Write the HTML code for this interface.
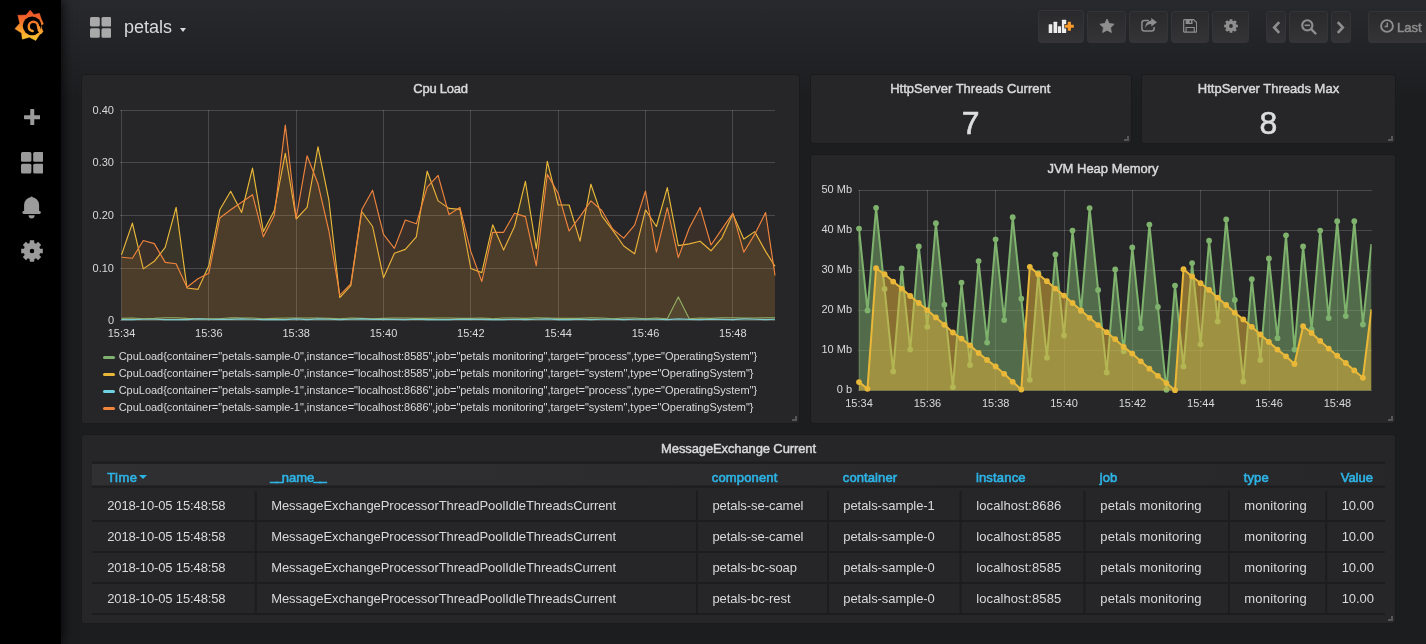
<!DOCTYPE html><html><head><meta charset="utf-8"><title>Grafana - petals</title><style>
*{box-sizing:border-box}
html,body{margin:0;padding:0}
body{width:1426px;height:644px;overflow:hidden;background:#1c1d1f linear-gradient(180deg,#28292c 0,#1c1d1f 100px) no-repeat;color:#d8d9da;font-family:"Liberation Sans",sans-serif;font-size:13px;position:relative}
#app{position:absolute;left:0;top:0;width:1426px;height:644px;will-change:transform}
.abs{position:absolute}
#side{left:0;top:0;width:61px;height:644px;background:#000;box-shadow:0 0 12px #000}
#side .ic{position:absolute;display:block;line-height:0}
.title{position:absolute;left:124px;top:16px;font-size:18px;line-height:22px;color:#d8d9da;white-space:nowrap}
.caret{position:absolute;left:179.5px;top:27.5px;width:0;height:0;border-left:3.5px solid transparent;border-right:3.5px solid transparent;border-top:4px solid #d8d9da}
.btn{position:absolute;top:11px;height:32px;border:1px solid #343437;border-radius:3px;background:linear-gradient(180deg,#2a2a2c,#343436)}
.btn svg{position:absolute}
.panel{position:absolute;background:#262628;border:1px solid #1a1a1c;border-radius:3px;overflow:hidden}
.ptitle{position:absolute;left:0;right:0;text-align:center;font-size:13px;line-height:16px;color:#d8d9da;white-space:nowrap;-webkit-text-stroke:0.45px #d8d9da}
.big{position:absolute;left:0;right:0;text-align:center;font-size:32px;line-height:32px;color:#dddedf;-webkit-text-stroke:0.6px #dddedf}
.rz{position:absolute;right:2px;bottom:2px;width:5px;height:5px;border-right:2px solid #555557;border-bottom:2px solid #555557}
.g{stroke:rgba(200,200,200,0.22);stroke-width:1;shape-rendering:crispEdges}
.ax{font-family:"Liberation Sans",sans-serif;font-size:11px;fill:#d8d9da}
.lg{position:absolute;left:21px;height:17px;white-space:nowrap;font-size:11px;line-height:17px;color:#d8d9da;letter-spacing:-0.026px}
.lg i{position:absolute;left:0;top:7.6px;width:12px;height:3px;border-radius:1.5px}
.lg span{position:absolute;left:15.7px;top:0}
.th{position:absolute;white-space:nowrap;font-size:13px;line-height:15px;color:#2db4e6;-webkit-text-stroke:0.6px #2db4e6}
.td{position:absolute;white-space:nowrap;font-size:13px;line-height:15px;color:#d8d9da}
</style></head><body><div id="app">
<div id="side" class="abs">
<span class="ic" style="left:12px;top:8px"><svg width="34" height="34" viewBox="0 0 644 644"><defs><linearGradient id="lg" gradientUnits="userSpaceOnUse" x1="0" y1="40" x2="0" y2="620"><stop offset="0" stop-color="#ee5128"/><stop offset="0.300" stop-color="#f2692b"/><stop offset="0.600" stop-color="#f7962c"/><stop offset="1" stop-color="#fdca30"/></linearGradient></defs><path d="M345,40 L415,122 L520,100 L552,200 L603,318 L552,356 L590,450 L522,505 L450,615 L330,556 L195,590 L180,474 L55,395 L146,290 L110,135 L265,134Z" fill="url(#lg)" stroke="url(#lg)" stroke-width="8" stroke-linejoin="round"/><circle cx="381" cy="337" r="177" fill="#000"/><path d="M548,330 L612,300 L600,352 Z" fill="#000"/><path d="M545,470 Q500,430 493,350 A88,88 0 0 0 405,262 A88,88 0 0 0 317,350 A88,88 0 0 0 392,436" fill="none" stroke="url(#lg)" stroke-width="46" stroke-linecap="round"/><path d="M560,460 Q512,420 512,345" fill="none" stroke="url(#lg)" stroke-width="40" stroke-linecap="butt"/></svg></span>
<span class="ic" style="left:23.7px;top:108.600px"><svg width="16.5" height="16.5" viewBox="0 0 16.5 16.5"><rect x="0" y="6.25" width="16.5" height="4" rx="0.7" fill="#9b9b9b"/><rect x="6.25" y="0" width="4" height="16.5" rx="0.7" fill="#9b9b9b"/></svg></span>
<span class="ic" style="left:20.7px;top:152px"><svg width="22.6" height="21.5" viewBox="0 0 22.6 21.5"><rect x="0.00" y="0.00" width="10.40" height="9.85" rx="1.6" fill="#9b9b9b"/><rect x="12.20" y="0.00" width="10.40" height="9.85" rx="1.6" fill="#9b9b9b"/><rect x="0.00" y="11.65" width="10.40" height="9.85" rx="1.6" fill="#9b9b9b"/><rect x="12.20" y="11.65" width="10.40" height="9.85" rx="1.6" fill="#9b9b9b"/></svg></span>
<span class="ic" style="left:22px;top:196.300px"><svg width="19" height="23" viewBox="0 0 19 23"><circle cx="9.600" cy="1.700" r="1.200" fill="#9b9b9b"/><path fill="#9b9b9b" d="M2.100 15.600V8.800a7.500 7.500 0 0 1 15 0V15.600z"/><rect x="0.400" y="14.900" width="18.400" height="3" rx="1.400" fill="#9b9b9b"/><path fill="#9b9b9b" d="M6.500 19.300h6.200a3.100 3.100 0 0 1-6.200 0z"/></svg></span>
<span class="ic" style="left:21.200px;top:240.400px"><svg width="22" height="22" viewBox="0 0 22 22"><path fill-rule="evenodd" fill="#9b9b9b" d="M19.03,8.67 L21.79,8.85 L21.79,13.15 L19.03,13.33 L18.33,15.03 L20.15,17.11 L17.11,20.15 L15.03,18.33 L13.33,19.03 L13.15,21.79 L8.85,21.79 L8.67,19.03 L6.97,18.33 L4.89,20.15 L1.85,17.11 L3.67,15.03 L2.97,13.33 L0.21,13.15 L0.21,8.85 L2.97,8.67 L3.67,6.97 L1.85,4.89 L4.89,1.85 L6.97,3.67 L8.67,2.97 L8.85,0.21 L13.15,0.21 L13.33,2.97 L15.03,3.67 L17.11,1.85 L20.15,4.89 L18.33,6.97Z M8.69,11.00 a2.31,2.31 0 1,0 4.62,0 a2.31,2.31 0 1,0 -4.62,0Z"/></svg></span>
</div>
<span class="abs" style="left:89.700px;top:17px;line-height:0"><svg width="21.3" height="20.8" viewBox="0 0 21.3 20.8"><rect x="0.00" y="0.00" width="9.80" height="9.55" rx="1.6" fill="#a9a9a9"/><rect x="11.50" y="0.00" width="9.80" height="9.55" rx="1.6" fill="#a9a9a9"/><rect x="0.00" y="11.25" width="9.80" height="9.55" rx="1.6" fill="#a9a9a9"/><rect x="11.50" y="11.25" width="9.80" height="9.55" rx="1.6" fill="#a9a9a9"/></svg></span>
<div class="title">petals</div><div class="caret"></div>
<div class="btn" style="left:1038px;width:46px;top:10px;height:33px"><span class="abs" style="left:9px;top:8px;line-height:0"><svg width="27" height="15" viewBox="-0.300 -0.500 27 15"><rect x="0.400" y="4.700" width="3.600" height="8.800" rx="0.500" fill="#ececec"/><rect x="5.200" y="2.300" width="3.700" height="11.200" rx="0.500" fill="#ececec"/><rect x="9.600" y="6.700" width="3.200" height="6.800" rx="0.500" fill="#ececec"/><rect x="13.600" y="0.200" width="4.300" height="13.300" rx="0.500" fill="#ececec"/><path d="M19.450 2.300h3.200v2.850h2.850v3.200h-2.850v2.850h-3.200V8.350h-2.850V5.150h2.850z" fill="#f89b2b" stroke="#2d2d2f" stroke-width="1.200" paint-order="stroke"/></svg></span></div>
<div class="btn" style="left:1087px;width:39px;top:11px;height:32px"><span class="abs" style="left:10.6px;top:6.3px;line-height:0"><svg width="16" height="16" viewBox="0 0 16 16"><polygon fill="#8e8e8e" stroke="#8e8e8e" stroke-width="0.8" stroke-linejoin="round" points="8.00,1.00 10.17,5.51 15.13,6.18 11.52,9.64 12.41,14.57 8.00,12.20 3.59,14.57 4.48,9.64 0.87,6.18 5.83,5.51"/></svg></span></div>
<div class="btn" style="left:1129px;width:39px;top:11px;height:32px"><span class="abs" style="left:10.6px;top:6.2px;line-height:0"><svg width="16" height="14" viewBox="0 0 16 14"><path fill="none" stroke="#8e8e8e" stroke-width="1.5" stroke-linecap="round" d="M7.2 2.400H3.400C1.900 2.400 0.900 3.400 0.900 4.900v5.700c0 1.500 1 2.500 2.500 2.500h7.200c1.500 0 2.500-1 2.500-2.500V9.500"/><path fill="#8e8e8e" d="M10.300 0l5.700 4.300-5.700 4.300V6.100C7 6.100 5.300 7.400 4.400 10.300 4.100 5.600 6.700 2.800 10.300 2.600z"/></svg></span></div>
<div class="btn" style="left:1171px;width:38px;top:11px;height:32px"><span class="abs" style="left:10.5px;top:7px;line-height:0"><svg width="14.300" height="13.700" viewBox="0 0 15 15" preserveAspectRatio="none"><path fill="none" stroke="#8e8e8e" stroke-width="1.300" stroke-linejoin="round" d="M0.700 1.400c0-0.400 0.300-0.700 0.700-0.700h9.700l3.200 3.200v9.700c0 0.400-0.300 0.700-0.700 0.700H1.400c-0.400 0-0.700-0.300-0.700-0.700z"/><path fill="none" stroke="#8e8e8e" stroke-width="1.200" d="M3.400 0.900v4h6v-4M3.200 14.200V9.300h8.600v4.900"/><path d="M3.400 0.900h6v4h-6z M7 1.600v2.500h1.500V1.600z" fill-rule="evenodd" fill="#8e8e8e"/></svg></span></div>
<div class="btn" style="left:1212px;width:37px;top:11px;height:32px"><span class="abs" style="left:10.7px;top:7px;line-height:0"><svg width="14" height="14" viewBox="0 0 14 14"><path fill-rule="evenodd" fill="#8e8e8e" d="M12.11,5.52 L13.87,5.63 L13.87,8.37 L12.11,8.48 L11.66,9.56 L12.82,10.89 L10.89,12.82 L9.56,11.66 L8.48,12.11 L8.37,13.87 L5.63,13.87 L5.52,12.11 L4.44,11.66 L3.11,12.82 L1.18,10.89 L2.34,9.56 L1.89,8.48 L0.13,8.37 L0.13,5.63 L1.89,5.52 L2.34,4.44 L1.18,3.11 L3.11,1.18 L4.44,2.34 L5.52,1.89 L5.63,0.13 L8.37,0.13 L8.48,1.89 L9.56,2.34 L10.89,1.18 L12.82,3.11 L11.66,4.44Z M5.11,7.00 a1.89,1.89 0 1,0 3.78,0 a1.89,1.89 0 1,0 -3.78,0Z"/></svg></span></div>
<div class="btn" style="left:1266px;width:20px;top:11px;height:32px"><span class="abs" style="left:5px;top:9.1px;line-height:0"><svg width="9" height="13" viewBox="0 0 9 13"><path fill="none" stroke="#8e8e8e" stroke-width="2.600" d="M7.200 1.200L2.200 6.500l5 5.300"/></svg></span></div>
<div class="btn" style="left:1289px;width:39px;top:11px;height:32px"><span class="abs" style="left:11px;top:7px;line-height:0"><svg width="16" height="16" viewBox="0 0 16 16"><circle cx="6.300" cy="6.300" r="5.100" fill="none" stroke="#8e8e8e" stroke-width="2.100"/><path d="M10.200 10.200l4.300 4.300" stroke="#8e8e8e" stroke-width="2.400" stroke-linecap="round"/><rect x="3.600" y="5.500" width="5.400" height="1.600" fill="#8e8e8e"/></svg></span></div>
<div class="btn" style="left:1331px;width:20px;top:11px;height:32px"><span class="abs" style="left:3.6px;top:9.1px;line-height:0"><svg width="9" height="13" viewBox="0 0 9 13"><path fill="none" stroke="#8e8e8e" stroke-width="2.600" d="M1.800 1.200l5 5.300-5 5.300"/></svg></span></div>
<div class="btn" style="left:1368px;width:70px;border-radius:3px 0 0 3px"><span class="abs" style="left:11px;top:7.200px;line-height:0"><svg width="14" height="14" viewBox="0 0 14 14"><circle cx="7" cy="7" r="5.900" fill="none" stroke="#8e8e8e" stroke-width="1.900"/><path d="M7.300 3.400v4.200H4.600" fill="none" stroke="#8e8e8e" stroke-width="1.500"/></svg></span><span class="abs" style="left:28px;top:7px;font-size:13px;line-height:18px;color:#8e8e8e;-webkit-text-stroke:0.5px #8e8e8e;white-space:nowrap">Last 15 minutes</span></div>
<div class="panel" style="left:81px;top:74px;width:719px;height:350px">
<svg class="abs" style="left:0;top:0" width="717" height="348" viewBox="82 75 717 348">
<line x1="120" x2="775" y1="110.5" y2="110.5" class="g"/>
<line x1="120" x2="775" y1="162.5" y2="162.5" class="g"/>
<line x1="120" x2="775" y1="215.5" y2="215.5" class="g"/>
<line x1="120" x2="775" y1="268.5" y2="268.5" class="g"/>
<line x1="120" x2="775" y1="320.5" y2="320.5" class="g"/>
<line y1="110" y2="321" x1="121.5" x2="121.5" class="g"/>
<line y1="110" y2="321" x1="208.5" x2="208.5" class="g"/>
<line y1="110" y2="321" x1="296.5" x2="296.5" class="g"/>
<line y1="110" y2="321" x1="383.5" x2="383.5" class="g"/>
<line y1="110" y2="321" x1="470.5" x2="470.5" class="g"/>
<line y1="110" y2="321" x1="558.5" x2="558.5" class="g"/>
<line y1="110" y2="321" x1="645.5" x2="645.5" class="g"/>
<line y1="110" y2="321" x1="732.5" x2="732.5" class="g"/>
<path d="M121.5,320.3 L121.5,318.4 L132.4,318.0 L143.3,318.7 L154.3,318.4 L165.2,317.7 L176.1,317.7 L187.0,318.4 L197.9,318.7 L208.8,318.7 L219.8,318.7 L230.7,317.7 L241.6,318.0 L252.5,318.0 L263.4,318.7 L274.3,318.4 L285.3,318.0 L296.2,318.0 L307.1,318.0 L318.0,318.0 L328.9,318.4 L339.8,318.7 L350.8,318.0 L361.7,318.4 L372.6,318.7 L383.5,318.4 L394.4,318.0 L405.3,318.0 L416.3,318.4 L427.2,318.4 L438.1,318.0 L449.0,318.0 L459.9,318.4 L470.8,318.4 L481.8,318.0 L492.7,318.7 L503.6,318.0 L514.5,318.0 L525.4,318.4 L536.3,317.7 L547.3,318.0 L558.2,318.4 L569.1,318.4 L580.0,318.4 L590.9,317.7 L601.8,318.0 L612.8,318.7 L623.7,318.0 L634.6,318.0 L645.5,318.7 L656.4,318.0 L667.3,318.7 L678.3,296.9 L689.2,318.7 L700.1,318.0 L711.0,318.4 L721.9,317.7 L732.8,317.7 L743.8,318.0 L754.7,318.0 L765.6,317.7 L775.0,317.7 L775.0,320.3 Z" fill="#7EB26D" fill-opacity="0.1"/>
<polyline points="121.5,318.4 132.4,318.0 143.3,318.7 154.3,318.4 165.2,317.7 176.1,317.7 187.0,318.4 197.9,318.7 208.8,318.7 219.8,318.7 230.7,317.7 241.6,318.0 252.5,318.0 263.4,318.7 274.3,318.4 285.3,318.0 296.2,318.0 307.1,318.0 318.0,318.0 328.9,318.4 339.8,318.7 350.8,318.0 361.7,318.4 372.6,318.7 383.5,318.4 394.4,318.0 405.3,318.0 416.3,318.4 427.2,318.4 438.1,318.0 449.0,318.0 459.9,318.4 470.8,318.4 481.8,318.0 492.7,318.7 503.6,318.0 514.5,318.0 525.4,318.4 536.3,317.7 547.3,318.0 558.2,318.4 569.1,318.4 580.0,318.4 590.9,317.7 601.8,318.0 612.8,318.7 623.7,318.0 634.6,318.0 645.5,318.7 656.4,318.0 667.3,318.7 678.3,296.9 689.2,318.7 700.1,318.0 711.0,318.4 721.9,317.7 732.8,317.7 743.8,318.0 754.7,318.0 765.6,317.7 775.0,317.7" fill="none" stroke="#7EB26D" stroke-width="1.15" stroke-linejoin="round"/>
<path d="M121.5,320.3 L121.5,254.9 L132.4,223.1 L143.3,268.9 L154.3,261.3 L165.2,247.3 L176.1,207.4 L187.0,288.0 L197.9,289.4 L208.8,265.8 L219.8,209.8 L230.7,191.3 L241.6,212.5 L252.5,168.1 L263.4,231.6 L274.3,210.5 L285.3,153.4 L296.2,219.0 L307.1,207.4 L318.0,146.9 L328.9,200.2 L339.8,297.5 L350.8,285.6 L361.7,211.5 L372.6,226.5 L383.5,277.7 L394.4,253.2 L405.3,249.4 L416.3,236.8 L427.2,171.2 L438.1,200.9 L449.0,208.4 L459.9,209.4 L470.8,268.5 L481.8,272.6 L492.7,224.8 L503.6,250.1 L514.5,226.5 L525.4,181.4 L536.3,248.7 L547.3,161.3 L558.2,205.0 L569.1,205.0 L580.0,241.2 L590.9,184.2 L601.8,215.9 L612.8,230.3 L623.7,246.0 L634.6,253.8 L645.5,209.8 L656.4,226.5 L667.3,187.6 L678.3,245.6 L689.2,243.9 L700.1,241.2 L711.0,250.8 L721.9,237.8 L732.8,213.9 L743.8,239.1 L754.7,231.6 L765.6,251.4 L775.0,266.2 L775.0,320.3 Z" fill="#EAB839" fill-opacity="0.1"/>
<polyline points="121.5,254.9 132.4,223.1 143.3,268.9 154.3,261.3 165.2,247.3 176.1,207.4 187.0,288.0 197.9,289.4 208.8,265.8 219.8,209.8 230.7,191.3 241.6,212.5 252.5,168.1 263.4,231.6 274.3,210.5 285.3,153.4 296.2,219.0 307.1,207.4 318.0,146.9 328.9,200.2 339.8,297.5 350.8,285.6 361.7,211.5 372.6,226.5 383.5,277.7 394.4,253.2 405.3,249.4 416.3,236.8 427.2,171.2 438.1,200.9 449.0,208.4 459.9,209.4 470.8,268.5 481.8,272.6 492.7,224.8 503.6,250.1 514.5,226.5 525.4,181.4 536.3,248.7 547.3,161.3 558.2,205.0 569.1,205.0 580.0,241.2 590.9,184.2 601.8,215.9 612.8,230.3 623.7,246.0 634.6,253.8 645.5,209.8 656.4,226.5 667.3,187.6 678.3,245.6 689.2,243.9 700.1,241.2 711.0,250.8 721.9,237.8 732.8,213.9 743.8,239.1 754.7,231.6 765.6,251.4 775.0,266.2" fill="none" stroke="#EAB839" stroke-width="1.15" stroke-linejoin="round"/>
<path d="M121.5,320.3 L121.5,319.6 L132.4,319.6 L143.3,319.2 L154.3,319.2 L165.2,319.6 L176.1,319.6 L187.0,319.6 L197.9,318.9 L208.8,319.2 L219.8,319.4 L230.7,319.4 L241.6,318.9 L252.5,319.2 L263.4,319.6 L274.3,319.6 L285.3,319.6 L296.2,318.9 L307.1,319.6 L318.0,318.9 L328.9,319.2 L339.8,319.6 L350.8,319.2 L361.7,318.9 L372.6,319.4 L383.5,319.2 L394.4,319.4 L405.3,319.6 L416.3,319.2 L427.2,319.6 L438.1,319.6 L449.0,319.6 L459.9,319.2 L470.8,319.4 L481.8,319.4 L492.7,319.6 L503.6,319.6 L514.5,319.2 L525.4,319.6 L536.3,319.2 L547.3,318.9 L558.2,319.6 L569.1,319.6 L580.0,319.2 L590.9,319.6 L601.8,319.2 L612.8,319.2 L623.7,319.6 L634.6,319.2 L645.5,319.2 L656.4,319.2 L667.3,319.6 L678.3,318.9 L689.2,319.4 L700.1,319.6 L711.0,319.2 L721.9,319.4 L732.8,319.6 L743.8,318.9 L754.7,319.2 L765.6,319.6 L775.0,319.3 L775.0,320.3 Z" fill="#6ED0E0" fill-opacity="0.1"/>
<polyline points="121.5,319.6 132.4,319.6 143.3,319.2 154.3,319.2 165.2,319.6 176.1,319.6 187.0,319.6 197.9,318.9 208.8,319.2 219.8,319.4 230.7,319.4 241.6,318.9 252.5,319.2 263.4,319.6 274.3,319.6 285.3,319.6 296.2,318.9 307.1,319.6 318.0,318.9 328.9,319.2 339.8,319.6 350.8,319.2 361.7,318.9 372.6,319.4 383.5,319.2 394.4,319.4 405.3,319.6 416.3,319.2 427.2,319.6 438.1,319.6 449.0,319.6 459.9,319.2 470.8,319.4 481.8,319.4 492.7,319.6 503.6,319.6 514.5,319.2 525.4,319.6 536.3,319.2 547.3,318.9 558.2,319.6 569.1,319.6 580.0,319.2 590.9,319.6 601.8,319.2 612.8,319.2 623.7,319.6 634.6,319.2 645.5,319.2 656.4,319.2 667.3,319.6 678.3,318.9 689.2,319.4 700.1,319.6 711.0,319.2 721.9,319.4 732.8,319.6 743.8,318.9 754.7,319.2 765.6,319.6 775.0,319.3" fill="none" stroke="#6ED0E0" stroke-width="1.15" stroke-linejoin="round"/>
<path d="M121.5,320.3 L121.5,257.2 L132.4,258.3 L143.3,240.5 L154.3,243.6 L165.2,262.4 L176.1,263.7 L187.0,287.3 L197.9,278.8 L208.8,273.3 L219.8,218.0 L230.7,209.8 L241.6,202.3 L252.5,194.7 L263.4,236.8 L274.3,215.2 L285.3,125.1 L296.2,218.0 L307.1,155.8 L318.0,183.8 L328.9,231.0 L339.8,295.2 L350.8,283.9 L361.7,209.8 L372.6,190.3 L383.5,234.4 L394.4,248.4 L405.3,220.0 L416.3,223.8 L427.2,187.2 L438.1,175.3 L449.0,214.6 L459.9,207.4 L470.8,251.4 L481.8,281.5 L492.7,232.3 L503.6,232.3 L514.5,213.2 L525.4,216.6 L536.3,265.8 L547.3,174.3 L558.2,193.4 L569.1,231.0 L580.0,216.6 L590.9,200.9 L601.8,210.5 L612.8,229.2 L623.7,238.1 L634.6,225.1 L645.5,191.0 L656.4,252.1 L667.3,207.7 L678.3,257.6 L689.2,228.2 L700.1,207.4 L711.0,245.0 L721.9,229.2 L732.8,213.2 L743.8,252.1 L754.7,234.4 L765.6,212.5 L775.0,275.5 L775.0,320.3 Z" fill="#EF843C" fill-opacity="0.1"/>
<polyline points="121.5,257.2 132.4,258.3 143.3,240.5 154.3,243.6 165.2,262.4 176.1,263.7 187.0,287.3 197.9,278.8 208.8,273.3 219.8,218.0 230.7,209.8 241.6,202.3 252.5,194.7 263.4,236.8 274.3,215.2 285.3,125.1 296.2,218.0 307.1,155.8 318.0,183.8 328.9,231.0 339.8,295.2 350.8,283.9 361.7,209.8 372.6,190.3 383.5,234.4 394.4,248.4 405.3,220.0 416.3,223.8 427.2,187.2 438.1,175.3 449.0,214.6 459.9,207.4 470.8,251.4 481.8,281.5 492.7,232.3 503.6,232.3 514.5,213.2 525.4,216.6 536.3,265.8 547.3,174.3 558.2,193.4 569.1,231.0 580.0,216.6 590.9,200.9 601.8,210.5 612.8,229.2 623.7,238.1 634.6,225.1 645.5,191.0 656.4,252.1 667.3,207.7 678.3,257.6 689.2,228.2 700.1,207.4 711.0,245.0 721.9,229.2 732.8,213.2 743.8,252.1 754.7,234.4 765.6,212.5 775.0,275.5" fill="none" stroke="#EF843C" stroke-width="1.15" stroke-linejoin="round"/>
<text x="114" y="113.8" class="ax" text-anchor="end">0.40</text>
<text x="114" y="165.8" class="ax" text-anchor="end">0.30</text>
<text x="114" y="218.8" class="ax" text-anchor="end">0.20</text>
<text x="114" y="271.8" class="ax" text-anchor="end">0.10</text>
<text x="114" y="323.8" class="ax" text-anchor="end">0</text>
<text x="121.5" y="337" class="ax" text-anchor="middle">15:34</text>
<text x="208.8" y="337" class="ax" text-anchor="middle">15:36</text>
<text x="296.2" y="337" class="ax" text-anchor="middle">15:38</text>
<text x="383.5" y="337" class="ax" text-anchor="middle">15:40</text>
<text x="470.8" y="337" class="ax" text-anchor="middle">15:42</text>
<text x="558.2" y="337" class="ax" text-anchor="middle">15:44</text>
<text x="645.5" y="337" class="ax" text-anchor="middle">15:46</text>
<text x="732.8" y="337" class="ax" text-anchor="middle">15:48</text>
</svg>
<div class="ptitle" style="top:5.5px;letter-spacing:-0.24px">Cpu Load</div>
<div class="lg" style="top:273px"><i style="background:#7EB26D"></i><span>CpuLoad{container=&quot;petals-sample-0&quot;,instance=&quot;localhost:8585&quot;,job=&quot;petals monitoring&quot;,target=&quot;process&quot;,type=&quot;OperatingSystem&quot;}</span></div>
<div class="lg" style="top:290px"><i style="background:#EAB839"></i><span>CpuLoad{container=&quot;petals-sample-0&quot;,instance=&quot;localhost:8585&quot;,job=&quot;petals monitoring&quot;,target=&quot;system&quot;,type=&quot;OperatingSystem&quot;}</span></div>
<div class="lg" style="top:307px"><i style="background:#6ED0E0"></i><span>CpuLoad{container=&quot;petals-sample-1&quot;,instance=&quot;localhost:8686&quot;,job=&quot;petals monitoring&quot;,target=&quot;process&quot;,type=&quot;OperatingSystem&quot;}</span></div>
<div class="lg" style="top:324px"><i style="background:#EF843C"></i><span>CpuLoad{container=&quot;petals-sample-1&quot;,instance=&quot;localhost:8686&quot;,job=&quot;petals monitoring&quot;,target=&quot;system&quot;,type=&quot;OperatingSystem&quot;}</span></div>
<div class="rz"></div></div>
<div class="panel" style="left:810px;top:74px;width:321.5px;height:70px"><div class="ptitle" style="top:5.5px;left:-1px">HttpServer Threads Current</div><div class="big" style="top:31.5px">7</div><div class="rz"></div></div>
<div class="panel" style="left:1141px;top:74px;width:255px;height:70px"><div class="ptitle" style="top:5.5px">HttpServer Threads Max</div><div class="big" style="top:31.5px">8</div><div class="rz"></div></div>
<div class="panel" style="left:810px;top:154px;width:586px;height:270px">
<svg class="abs" style="left:0;top:0" width="584" height="268" viewBox="811 155 584 268">
<line x1="858" x2="1371.6" y1="190.5" y2="190.5" class="g"/>
<line x1="858" x2="1371.6" y1="230.5" y2="230.5" class="g"/>
<line x1="858" x2="1371.6" y1="270.5" y2="270.5" class="g"/>
<line x1="858" x2="1371.6" y1="310.5" y2="310.5" class="g"/>
<line x1="858" x2="1371.6" y1="350.5" y2="350.5" class="g"/>
<line x1="858" x2="1371.6" y1="390.5" y2="390.5" class="g"/>
<line y1="190" y2="391" x1="859.5" x2="859.5" class="g"/>
<line y1="190" y2="391" x1="927.5" x2="927.5" class="g"/>
<line y1="190" y2="391" x1="995.5" x2="995.5" class="g"/>
<line y1="190" y2="391" x1="1064.5" x2="1064.5" class="g"/>
<line y1="190" y2="391" x1="1132.5" x2="1132.5" class="g"/>
<line y1="190" y2="391" x1="1200.5" x2="1200.5" class="g"/>
<line y1="190" y2="391" x1="1269.5" x2="1269.5" class="g"/>
<line y1="190" y2="391" x1="1337.5" x2="1337.5" class="g"/>
<clipPath id="jc"><rect x="858.6" y="185" width="513" height="210"/></clipPath>
<g clip-path="url(#jc)">
<path d="M850.5,390.5 L850.5,310.4 L859.0,228.6 L867.5,310.4 L876.1,207.8 L884.6,288.9 L893.2,371.4 L901.7,268.5 L910.2,349.6 L918.8,246.4 L927.3,326.8 L935.9,223.2 L944.4,304.7 L952.9,387.2 L961.5,282.6 L970.0,365.0 L978.6,261.1 L987.1,342.6 L995.6,239.3 L1004.2,320.1 L1012.7,217.2 L1021.3,298.7 L1029.8,379.8 L1038.3,273.2 L1046.9,357.7 L1055.4,254.4 L1064.0,335.5 L1072.5,230.6 L1081.0,311.1 L1089.6,208.1 L1098.1,289.9 L1106.7,372.4 L1115.2,269.5 L1123.7,351.3 L1132.3,247.4 L1140.8,328.2 L1149.4,224.6 L1157.9,307.0 L1166.4,389.8 L1175.0,285.6 L1183.5,366.4 L1192.1,263.1 L1200.6,344.3 L1209.1,240.7 L1217.7,321.5 L1226.2,219.5 L1234.8,300.0 L1243.3,381.5 L1251.8,279.2 L1260.4,360.0 L1268.9,258.4 L1277.5,338.2 L1286.0,235.3 L1294.5,349.6 L1303.1,246.4 L1311.6,329.5 L1320.2,230.6 L1328.7,318.1 L1337.2,221.2 L1345.8,316.1 L1354.3,221.2 L1362.9,324.5 L1371.4,244.0 L1371.4,390.5 Z" fill="#7EB26D" fill-opacity="0.5"/>
<polyline points="850.5,310.4 859.0,228.6 867.5,310.4 876.1,207.8 884.6,288.9 893.2,371.4 901.7,268.5 910.2,349.6 918.8,246.4 927.3,326.8 935.9,223.2 944.4,304.7 952.9,387.2 961.5,282.6 970.0,365.0 978.6,261.1 987.1,342.6 995.6,239.3 1004.2,320.1 1012.7,217.2 1021.3,298.7 1029.8,379.8 1038.3,273.2 1046.9,357.7 1055.4,254.4 1064.0,335.5 1072.5,230.6 1081.0,311.1 1089.6,208.1 1098.1,289.9 1106.7,372.4 1115.2,269.5 1123.7,351.3 1132.3,247.4 1140.8,328.2 1149.4,224.6 1157.9,307.0 1166.4,389.8 1175.0,285.6 1183.5,366.4 1192.1,263.1 1200.6,344.3 1209.1,240.7 1217.7,321.5 1226.2,219.5 1234.8,300.0 1243.3,381.5 1251.8,279.2 1260.4,360.0 1268.9,258.4 1277.5,338.2 1286.0,235.3 1294.5,349.6 1303.1,246.4 1311.6,329.5 1320.2,230.6 1328.7,318.1 1337.2,221.2 1345.8,316.1 1354.3,221.2 1362.9,324.5 1371.4,244.0" fill="none" stroke="#7EB26D" stroke-width="2" stroke-linejoin="round"/>
</g>
<circle cx="859.0" cy="228.6" r="2.9" fill="#7EB26D"/>
<circle cx="867.5" cy="310.4" r="2.9" fill="#7EB26D"/>
<circle cx="876.1" cy="207.8" r="2.9" fill="#7EB26D"/>
<circle cx="884.6" cy="288.9" r="2.9" fill="#7EB26D"/>
<circle cx="893.2" cy="371.4" r="2.9" fill="#7EB26D"/>
<circle cx="901.7" cy="268.5" r="2.9" fill="#7EB26D"/>
<circle cx="910.2" cy="349.6" r="2.9" fill="#7EB26D"/>
<circle cx="918.8" cy="246.4" r="2.9" fill="#7EB26D"/>
<circle cx="927.3" cy="326.8" r="2.9" fill="#7EB26D"/>
<circle cx="935.9" cy="223.2" r="2.9" fill="#7EB26D"/>
<circle cx="944.4" cy="304.7" r="2.9" fill="#7EB26D"/>
<circle cx="952.9" cy="387.2" r="2.9" fill="#7EB26D"/>
<circle cx="961.5" cy="282.6" r="2.9" fill="#7EB26D"/>
<circle cx="970.0" cy="365.0" r="2.9" fill="#7EB26D"/>
<circle cx="978.6" cy="261.1" r="2.9" fill="#7EB26D"/>
<circle cx="987.1" cy="342.6" r="2.9" fill="#7EB26D"/>
<circle cx="995.6" cy="239.3" r="2.9" fill="#7EB26D"/>
<circle cx="1004.2" cy="320.1" r="2.9" fill="#7EB26D"/>
<circle cx="1012.7" cy="217.2" r="2.9" fill="#7EB26D"/>
<circle cx="1021.3" cy="298.7" r="2.9" fill="#7EB26D"/>
<circle cx="1029.8" cy="379.8" r="2.9" fill="#7EB26D"/>
<circle cx="1038.3" cy="273.2" r="2.9" fill="#7EB26D"/>
<circle cx="1046.9" cy="357.7" r="2.9" fill="#7EB26D"/>
<circle cx="1055.4" cy="254.4" r="2.9" fill="#7EB26D"/>
<circle cx="1064.0" cy="335.5" r="2.9" fill="#7EB26D"/>
<circle cx="1072.5" cy="230.6" r="2.9" fill="#7EB26D"/>
<circle cx="1081.0" cy="311.1" r="2.9" fill="#7EB26D"/>
<circle cx="1089.6" cy="208.1" r="2.9" fill="#7EB26D"/>
<circle cx="1098.1" cy="289.9" r="2.9" fill="#7EB26D"/>
<circle cx="1106.7" cy="372.4" r="2.9" fill="#7EB26D"/>
<circle cx="1115.2" cy="269.5" r="2.9" fill="#7EB26D"/>
<circle cx="1123.7" cy="351.3" r="2.9" fill="#7EB26D"/>
<circle cx="1132.3" cy="247.4" r="2.9" fill="#7EB26D"/>
<circle cx="1140.8" cy="328.2" r="2.9" fill="#7EB26D"/>
<circle cx="1149.4" cy="224.6" r="2.9" fill="#7EB26D"/>
<circle cx="1157.9" cy="307.0" r="2.9" fill="#7EB26D"/>
<circle cx="1166.4" cy="389.8" r="2.9" fill="#7EB26D"/>
<circle cx="1175.0" cy="285.6" r="2.9" fill="#7EB26D"/>
<circle cx="1183.5" cy="366.4" r="2.9" fill="#7EB26D"/>
<circle cx="1192.1" cy="263.1" r="2.9" fill="#7EB26D"/>
<circle cx="1200.6" cy="344.3" r="2.9" fill="#7EB26D"/>
<circle cx="1209.1" cy="240.7" r="2.9" fill="#7EB26D"/>
<circle cx="1217.7" cy="321.5" r="2.9" fill="#7EB26D"/>
<circle cx="1226.2" cy="219.5" r="2.9" fill="#7EB26D"/>
<circle cx="1234.8" cy="300.0" r="2.9" fill="#7EB26D"/>
<circle cx="1243.3" cy="381.5" r="2.9" fill="#7EB26D"/>
<circle cx="1251.8" cy="279.2" r="2.9" fill="#7EB26D"/>
<circle cx="1260.4" cy="360.0" r="2.9" fill="#7EB26D"/>
<circle cx="1268.9" cy="258.4" r="2.9" fill="#7EB26D"/>
<circle cx="1277.5" cy="338.2" r="2.9" fill="#7EB26D"/>
<circle cx="1286.0" cy="235.3" r="2.9" fill="#7EB26D"/>
<circle cx="1294.5" cy="349.6" r="2.9" fill="#7EB26D"/>
<circle cx="1303.1" cy="246.4" r="2.9" fill="#7EB26D"/>
<circle cx="1311.6" cy="329.5" r="2.9" fill="#7EB26D"/>
<circle cx="1320.2" cy="230.6" r="2.9" fill="#7EB26D"/>
<circle cx="1328.7" cy="318.1" r="2.9" fill="#7EB26D"/>
<circle cx="1337.2" cy="221.2" r="2.9" fill="#7EB26D"/>
<circle cx="1345.8" cy="316.1" r="2.9" fill="#7EB26D"/>
<circle cx="1354.3" cy="221.2" r="2.9" fill="#7EB26D"/>
<circle cx="1362.9" cy="324.5" r="2.9" fill="#7EB26D"/>
<g clip-path="url(#jc)">
<path d="M859.0,390.5 L859.0,382.1 L867.5,388.8 L876.1,268.2 L884.6,274.2 L893.2,281.6 L901.7,288.6 L910.2,296.0 L918.8,303.0 L927.3,310.1 L935.9,317.4 L944.4,324.8 L952.9,332.5 L961.5,338.6 L970.0,345.3 L978.6,353.0 L987.1,360.0 L995.6,366.4 L1004.2,373.8 L1012.7,381.8 L1021.3,389.5 L1029.8,266.8 L1038.3,274.2 L1046.9,281.2 L1055.4,288.6 L1064.0,295.6 L1072.5,303.0 L1081.0,310.4 L1089.6,317.8 L1098.1,325.1 L1106.7,332.2 L1115.2,339.2 L1123.7,346.9 L1132.3,353.6 L1140.8,361.3 L1149.4,368.7 L1157.9,375.8 L1166.4,383.1 L1175.0,390.2 L1183.5,269.2 L1192.1,276.5 L1200.6,283.2 L1209.1,289.9 L1217.7,297.7 L1226.2,305.0 L1234.8,312.7 L1243.3,319.4 L1251.8,326.8 L1260.4,334.5 L1268.9,341.9 L1277.5,349.6 L1286.0,356.3 L1294.5,364.0 L1303.1,326.2 L1311.6,332.9 L1320.2,340.9 L1328.7,348.6 L1337.2,355.7 L1345.8,363.0 L1354.3,370.4 L1362.9,377.8 L1371.4,309.4 L1371.4,390.5 Z" fill="#EAB839" fill-opacity="0.5"/>
<polyline points="859.0,382.1 867.5,388.8 876.1,268.2 884.6,274.2 893.2,281.6 901.7,288.6 910.2,296.0 918.8,303.0 927.3,310.1 935.9,317.4 944.4,324.8 952.9,332.5 961.5,338.6 970.0,345.3 978.6,353.0 987.1,360.0 995.6,366.4 1004.2,373.8 1012.7,381.8 1021.3,389.5 1029.8,266.8 1038.3,274.2 1046.9,281.2 1055.4,288.6 1064.0,295.6 1072.5,303.0 1081.0,310.4 1089.6,317.8 1098.1,325.1 1106.7,332.2 1115.2,339.2 1123.7,346.9 1132.3,353.6 1140.8,361.3 1149.4,368.7 1157.9,375.8 1166.4,383.1 1175.0,390.2 1183.5,269.2 1192.1,276.5 1200.6,283.2 1209.1,289.9 1217.7,297.7 1226.2,305.0 1234.8,312.7 1243.3,319.4 1251.8,326.8 1260.4,334.5 1268.9,341.9 1277.5,349.6 1286.0,356.3 1294.5,364.0 1303.1,326.2 1311.6,332.9 1320.2,340.9 1328.7,348.6 1337.2,355.7 1345.8,363.0 1354.3,370.4 1362.9,377.8 1371.4,309.4" fill="none" stroke="#EAB839" stroke-width="2" stroke-linejoin="round"/>
</g>
<circle cx="859.0" cy="382.1" r="2.9" fill="#EAB839"/>
<circle cx="867.5" cy="388.8" r="2.9" fill="#EAB839"/>
<circle cx="876.1" cy="268.2" r="2.9" fill="#EAB839"/>
<circle cx="884.6" cy="274.2" r="2.9" fill="#EAB839"/>
<circle cx="893.2" cy="281.6" r="2.9" fill="#EAB839"/>
<circle cx="901.7" cy="288.6" r="2.9" fill="#EAB839"/>
<circle cx="910.2" cy="296.0" r="2.9" fill="#EAB839"/>
<circle cx="918.8" cy="303.0" r="2.9" fill="#EAB839"/>
<circle cx="927.3" cy="310.1" r="2.9" fill="#EAB839"/>
<circle cx="935.9" cy="317.4" r="2.9" fill="#EAB839"/>
<circle cx="944.4" cy="324.8" r="2.9" fill="#EAB839"/>
<circle cx="952.9" cy="332.5" r="2.9" fill="#EAB839"/>
<circle cx="961.5" cy="338.6" r="2.9" fill="#EAB839"/>
<circle cx="970.0" cy="345.3" r="2.9" fill="#EAB839"/>
<circle cx="978.6" cy="353.0" r="2.9" fill="#EAB839"/>
<circle cx="987.1" cy="360.0" r="2.9" fill="#EAB839"/>
<circle cx="995.6" cy="366.4" r="2.9" fill="#EAB839"/>
<circle cx="1004.2" cy="373.8" r="2.9" fill="#EAB839"/>
<circle cx="1012.7" cy="381.8" r="2.9" fill="#EAB839"/>
<circle cx="1021.3" cy="389.5" r="2.9" fill="#EAB839"/>
<circle cx="1029.8" cy="266.8" r="2.9" fill="#EAB839"/>
<circle cx="1038.3" cy="274.2" r="2.9" fill="#EAB839"/>
<circle cx="1046.9" cy="281.2" r="2.9" fill="#EAB839"/>
<circle cx="1055.4" cy="288.6" r="2.9" fill="#EAB839"/>
<circle cx="1064.0" cy="295.6" r="2.9" fill="#EAB839"/>
<circle cx="1072.5" cy="303.0" r="2.9" fill="#EAB839"/>
<circle cx="1081.0" cy="310.4" r="2.9" fill="#EAB839"/>
<circle cx="1089.6" cy="317.8" r="2.9" fill="#EAB839"/>
<circle cx="1098.1" cy="325.1" r="2.9" fill="#EAB839"/>
<circle cx="1106.7" cy="332.2" r="2.9" fill="#EAB839"/>
<circle cx="1115.2" cy="339.2" r="2.9" fill="#EAB839"/>
<circle cx="1123.7" cy="346.9" r="2.9" fill="#EAB839"/>
<circle cx="1132.3" cy="353.6" r="2.9" fill="#EAB839"/>
<circle cx="1140.8" cy="361.3" r="2.9" fill="#EAB839"/>
<circle cx="1149.4" cy="368.7" r="2.9" fill="#EAB839"/>
<circle cx="1157.9" cy="375.8" r="2.9" fill="#EAB839"/>
<circle cx="1166.4" cy="383.1" r="2.9" fill="#EAB839"/>
<circle cx="1175.0" cy="390.2" r="2.9" fill="#EAB839"/>
<circle cx="1183.5" cy="269.2" r="2.9" fill="#EAB839"/>
<circle cx="1192.1" cy="276.5" r="2.9" fill="#EAB839"/>
<circle cx="1200.6" cy="283.2" r="2.9" fill="#EAB839"/>
<circle cx="1209.1" cy="289.9" r="2.9" fill="#EAB839"/>
<circle cx="1217.7" cy="297.7" r="2.9" fill="#EAB839"/>
<circle cx="1226.2" cy="305.0" r="2.9" fill="#EAB839"/>
<circle cx="1234.8" cy="312.7" r="2.9" fill="#EAB839"/>
<circle cx="1243.3" cy="319.4" r="2.9" fill="#EAB839"/>
<circle cx="1251.8" cy="326.8" r="2.9" fill="#EAB839"/>
<circle cx="1260.4" cy="334.5" r="2.9" fill="#EAB839"/>
<circle cx="1268.9" cy="341.9" r="2.9" fill="#EAB839"/>
<circle cx="1277.5" cy="349.6" r="2.9" fill="#EAB839"/>
<circle cx="1286.0" cy="356.3" r="2.9" fill="#EAB839"/>
<circle cx="1294.5" cy="364.0" r="2.9" fill="#EAB839"/>
<circle cx="1303.1" cy="326.2" r="2.9" fill="#EAB839"/>
<circle cx="1311.6" cy="332.9" r="2.9" fill="#EAB839"/>
<circle cx="1320.2" cy="340.9" r="2.9" fill="#EAB839"/>
<circle cx="1328.7" cy="348.6" r="2.9" fill="#EAB839"/>
<circle cx="1337.2" cy="355.7" r="2.9" fill="#EAB839"/>
<circle cx="1345.8" cy="363.0" r="2.9" fill="#EAB839"/>
<circle cx="1354.3" cy="370.4" r="2.9" fill="#EAB839"/>
<circle cx="1362.9" cy="377.8" r="2.9" fill="#EAB839"/>
<text x="852" y="192.9" class="ax" text-anchor="end">50 Mb</text>
<text x="852" y="232.9" class="ax" text-anchor="end">40 Mb</text>
<text x="852" y="272.9" class="ax" text-anchor="end">30 Mb</text>
<text x="852" y="312.9" class="ax" text-anchor="end">20 Mb</text>
<text x="852" y="352.9" class="ax" text-anchor="end">10 Mb</text>
<text x="852" y="392.9" class="ax" text-anchor="end">0 b</text>
<text x="859.0" y="407" class="ax" text-anchor="middle">15:34</text>
<text x="927.4" y="407" class="ax" text-anchor="middle">15:36</text>
<text x="995.7" y="407" class="ax" text-anchor="middle">15:38</text>
<text x="1064.0" y="407" class="ax" text-anchor="middle">15:40</text>
<text x="1132.4" y="407" class="ax" text-anchor="middle">15:42</text>
<text x="1200.8" y="407" class="ax" text-anchor="middle">15:44</text>
<text x="1269.1" y="407" class="ax" text-anchor="middle">15:46</text>
<text x="1337.4" y="407" class="ax" text-anchor="middle">15:48</text>
</svg>
<div class="ptitle" style="top:5.5px">JVM Heap Memory</div><div class="rz"></div></div>
<div class="panel" style="left:81px;top:434px;width:1315px;height:189.5px"><div class="ptitle" style="top:5.5px;letter-spacing:-0.12px">MessageExchange Current</div>
<svg class="abs" style="left:0;top:0" width="1313" height="188" viewBox="82 435 1313 188"><defs><linearGradient id="hb" gradientUnits="userSpaceOnUse" x1="92" y1="0" x2="1385" y2="0"><stop offset="0" stop-color="#303033"/><stop offset="1" stop-color="#27272a"/></linearGradient></defs>
<rect x="92" y="461.700" width="1293" height="26" fill="#1d1d1f"/><rect x="92" y="463.900" width="1293" height="21.600" fill="url(#hb)"/>
<rect x="92" y="520" width="1293" height="2" fill="#1d1d1f"/>
<rect x="92" y="551" width="1293" height="2" fill="#1d1d1f"/>
<rect x="92" y="582" width="1293" height="2" fill="#1d1d1f"/>
<rect x="92" y="613" width="1293" height="2" fill="#1d1d1f"/>
<rect x="254.8" y="491" width="2" height="124" fill="#1d1d1f"/>
<rect x="696" y="491" width="2" height="124" fill="#1d1d1f"/>
<rect x="827" y="491" width="2" height="124" fill="#1d1d1f"/>
<rect x="959.6" y="491" width="2" height="124" fill="#1d1d1f"/>
<rect x="1083.6" y="491" width="2" height="124" fill="#1d1d1f"/>
<rect x="1228" y="491" width="2" height="124" fill="#1d1d1f"/>
<rect x="1325.2" y="491" width="2" height="124" fill="#1d1d1f"/>
</svg>
<span class="th" style="left:25.2px;top:34.6px;letter-spacing:0.45px">Time</span>
<span class="th" style="left:188.3px;top:34.6px;letter-spacing:0px"><span style="letter-spacing:-1.5px;position:relative;top:-1.5px">__</span>name<span style="letter-spacing:-1.5px;position:relative;top:-1.5px;margin-left:-0.5px">__</span></span>
<span class="th" style="left:629.8px;top:34.6px;letter-spacing:0.15px">component</span>
<span class="th" style="left:760.8px;top:34.6px;letter-spacing:0.1px">container</span>
<span class="th" style="left:893.9px;top:34.6px;letter-spacing:0.18px">instance</span>
<span class="th" style="left:1017.8px;top:34.6px;letter-spacing:0px">job</span>
<span class="th" style="left:1161.8px;top:34.6px;letter-spacing:0.1px">type</span>
<span class="th" style="left:1258.7px;top:34.6px;letter-spacing:0px">Value</span>
<span class="abs" style="left:57.1px;top:40.2px;width:0;height:0;border-left:4px solid transparent;border-right:4px solid transparent;border-top:4.600px solid #2db4e6"></span>
<span class="td" style="left:25.2px;top:62.8px;letter-spacing:-0.13px">2018-10-05 15:48:58</span>
<span class="td" style="left:189.2px;top:62.8px;letter-spacing:-0.066px">MessageExchangeProcessorThreadPoolIdleThreadsCurrent</span>
<span class="td" style="left:630.4px;top:62.8px;letter-spacing:-0.05px">petals-se-camel</span>
<span class="td" style="left:761.3px;top:62.8px;letter-spacing:-0.07px">petals-sample-1</span>
<span class="td" style="left:894.3px;top:62.8px;letter-spacing:0.08px">localhost:8686</span>
<span class="td" style="left:1018.3px;top:62.8px;letter-spacing:0.14px">petals monitoring</span>
<span class="td" style="left:1162.3px;top:62.8px;letter-spacing:0.18px">monitoring</span>
<span class="td" style="left:1259.7px;top:62.8px;letter-spacing:-0.08px">10.00</span>
<span class="td" style="left:25.2px;top:93.8px;letter-spacing:-0.13px">2018-10-05 15:48:58</span>
<span class="td" style="left:189.2px;top:93.8px;letter-spacing:-0.066px">MessageExchangeProcessorThreadPoolIdleThreadsCurrent</span>
<span class="td" style="left:630.4px;top:93.8px;letter-spacing:-0.05px">petals-se-camel</span>
<span class="td" style="left:761.3px;top:93.8px;letter-spacing:-0.07px">petals-sample-0</span>
<span class="td" style="left:894.3px;top:93.8px;letter-spacing:0.08px">localhost:8585</span>
<span class="td" style="left:1018.3px;top:93.8px;letter-spacing:0.14px">petals monitoring</span>
<span class="td" style="left:1162.3px;top:93.8px;letter-spacing:0.18px">monitoring</span>
<span class="td" style="left:1259.7px;top:93.8px;letter-spacing:-0.08px">10.00</span>
<span class="td" style="left:25.2px;top:124.8px;letter-spacing:-0.13px">2018-10-05 15:48:58</span>
<span class="td" style="left:189.2px;top:124.8px;letter-spacing:-0.066px">MessageExchangeProcessorThreadPoolIdleThreadsCurrent</span>
<span class="td" style="left:630.4px;top:124.8px;letter-spacing:-0.05px">petals-bc-soap</span>
<span class="td" style="left:761.3px;top:124.8px;letter-spacing:-0.07px">petals-sample-0</span>
<span class="td" style="left:894.3px;top:124.8px;letter-spacing:0.08px">localhost:8585</span>
<span class="td" style="left:1018.3px;top:124.8px;letter-spacing:0.14px">petals monitoring</span>
<span class="td" style="left:1162.3px;top:124.8px;letter-spacing:0.18px">monitoring</span>
<span class="td" style="left:1259.7px;top:124.8px;letter-spacing:-0.08px">10.00</span>
<span class="td" style="left:25.2px;top:155.8px;letter-spacing:-0.13px">2018-10-05 15:48:58</span>
<span class="td" style="left:189.2px;top:155.8px;letter-spacing:-0.066px">MessageExchangeProcessorThreadPoolIdleThreadsCurrent</span>
<span class="td" style="left:630.4px;top:155.8px;letter-spacing:-0.05px">petals-bc-rest</span>
<span class="td" style="left:761.3px;top:155.8px;letter-spacing:-0.07px">petals-sample-0</span>
<span class="td" style="left:894.3px;top:155.8px;letter-spacing:0.08px">localhost:8585</span>
<span class="td" style="left:1018.3px;top:155.8px;letter-spacing:0.14px">petals monitoring</span>
<span class="td" style="left:1162.3px;top:155.8px;letter-spacing:0.18px">monitoring</span>
<span class="td" style="left:1259.7px;top:155.8px;letter-spacing:-0.08px">10.00</span>
<div class="rz"></div></div>
</div></body></html>
